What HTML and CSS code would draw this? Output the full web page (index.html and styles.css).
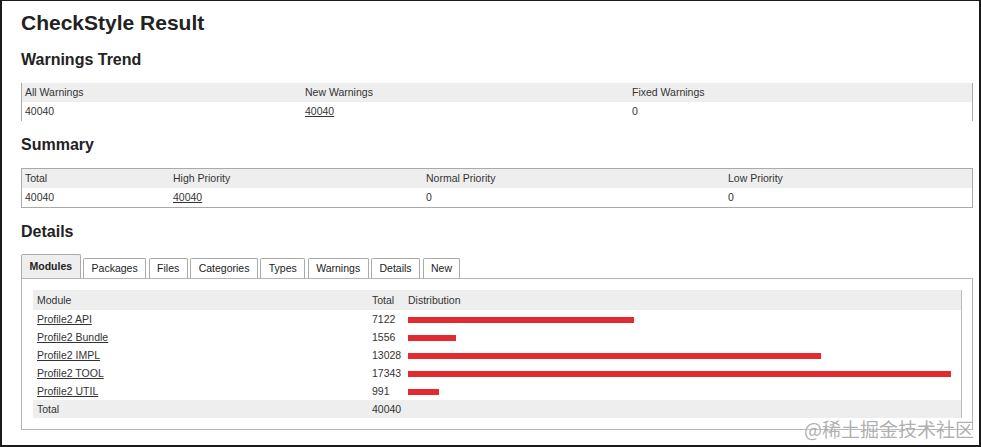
FILE: index.html
```html
<!DOCTYPE html>
<html lang="en">
<head>
    <meta charset="UTF-8">
    <title>CheckStyle Result</title>
    <link rel="stylesheet" href="styles.css">
</head>
<body>
    <div class="frame">
        <h1 class="title">CheckStyle Result</h1>

        <h2 class="section">Warnings Trend</h2>
        <table class="pane trend">
            <tr class="head">
                <td class="c1">All Warnings</td>
                <td class="c2">New Warnings</td>
                <td>Fixed Warnings</td>
            </tr>
            <tr>
                <td>40040</td>
                <td><a href="#">40040</a></td>
                <td>0</td>
            </tr>
        </table>

        <h2 class="section">Summary</h2>
        <table class="pane summary">
            <tr class="head">
                <td class="c1">Total</td>
                <td class="c2">High Priority</td>
                <td class="c3">Normal Priority</td>
                <td>Low Priority</td>
            </tr>
            <tr>
                <td>40040</td>
                <td><a href="#">40040</a></td>
                <td>0</td>
                <td>0</td>
            </tr>
        </table>

        <h2 class="section">Details</h2>
        <div class="tabs">
            <span class="tab active">Modules</span>
            <span class="tab">Packages</span>
            <span class="tab">Files</span>
            <span class="tab">Categories</span>
            <span class="tab">Types</span>
            <span class="tab">Warnings</span>
            <span class="tab">Details</span>
            <span class="tab">New</span>
        </div>
        <div class="tab-panel">
            <table class="modules">
                <tr class="head">
                    <td class="c1">Module</td>
                    <td class="c2">Total</td>
                    <td>Distribution</td>
                </tr>
                <tr>
                    <td><a href="#">Profile2 API</a></td>
                    <td>7122</td>
                    <td><div class="bar" style="width: 226px"></div></td>
                </tr>
                <tr>
                    <td><a href="#">Profile2 Bundle</a></td>
                    <td>1556</td>
                    <td><div class="bar" style="width: 48px"></div></td>
                </tr>
                <tr>
                    <td><a href="#">Profile2 IMPL</a></td>
                    <td>13028</td>
                    <td><div class="bar" style="width: 413px"></div></td>
                </tr>
                <tr>
                    <td><a href="#">Profile2 TOOL</a></td>
                    <td>17343</td>
                    <td><div class="bar" style="width: 543px"></div></td>
                </tr>
                <tr>
                    <td><a href="#">Profile2 UTIL</a></td>
                    <td>991</td>
                    <td><div class="bar" style="width: 31px"></div></td>
                </tr>
                <tr class="foot">
                    <td>Total</td>
                    <td>40040</td>
                    <td></td>
                </tr>
            </table>
        </div>

        <div class="watermark">@稀土掘金技术社区</div>
    </div>
</body>
</html>
```

FILE: styles.css
```css
html, body {
    margin: 0;
    padding: 0;
    background-color: #fff;
}
body {
    font-family: "Liberation Sans", Arial, sans-serif;
    color: #333;
}
.frame {
    position: relative;
    box-sizing: border-box;
    width: 981px;
    height: 447px;
    border: 2px solid #1b1b1b;
    border-top-width: 1px;
    padding: 9px 6px 0 19px;
    background-color: #fff;
}
.title {
    margin: 0 0 2px;
    font-size: 21px;
    line-height: 26px;
    font-weight: bold;
    color: #222;
}
.section {
    margin: 14px 0 13px;
    font-size: 16px;
    line-height: 20px;
    font-weight: bold;
    color: #222;
}
table {
    border-collapse: collapse;
    table-layout: fixed;
    width: 100%;
    font-size: 10.5px;
    line-height: 15px;
}
td {
    padding: 2px 3px;
    white-space: nowrap;
    text-align: left;
    vertical-align: middle;
}
a {
    color: #333;
    text-decoration: underline;
}
.head td {
    background-color: #eee;
}
.trend {
    border-left: 1px solid #aaa;
    border-right: 1px solid #aaa;
}
.trend .c1 { width: 274px; }
.trend .c2 { width: 321px; }
.summary {
    border: 1px solid #aaa;
}
.summary .c1 { width: 142px; }
.summary .c2 { width: 247px; }
.summary .c3 { width: 296px; }

/* tabs */
.tabs {
    display: flex;
    align-items: flex-end;
    gap: 2.6px;
    height: 24px;
    margin-top: -1px;
}
.tab {
    box-sizing: border-box;
    padding: 2px 7.4px;
    border: 1px solid #aaa;
    border-bottom: none;
    border-radius: 2px 2px 0 0;
    background-color: #fff;
    font-size: 10.5px;
    line-height: 15px;
    color: #222;
}
.tab.active {
    padding: 4px 7.5px;
    background-color: #eee;
    font-weight: bold;
}
.tab-panel {
    border: 1px solid #b4b4b4;
    padding: 11px 10px 11px 11px;
}
.modules {
    border-right: 1px solid #bbb;
}
.modules td {
    padding: 2px 3px 1px;
}
.modules td:first-child {
    padding-left: 4px;
}
.modules .head td {
    padding: 3px 3px 2px;
}
.modules .head td:first-child {
    padding-left: 4px;
}
.modules .c1 { width: 329px; }
.modules .c2 { width: 30px; }
.modules .foot td {
    background-color: #eee;
}
.bar {
    height: 6px;
    background-color: #e42a2e;
}
.watermark {
    position: absolute;
    right: 5px;
    bottom: 6px;
    font-family: "Noto Sans CJK SC", sans-serif;
    font-size: 19px;
    line-height: 20px;
    color: rgba(130, 130, 130, 0.65);
    text-shadow: 0 0 2px #fff;
}
```
